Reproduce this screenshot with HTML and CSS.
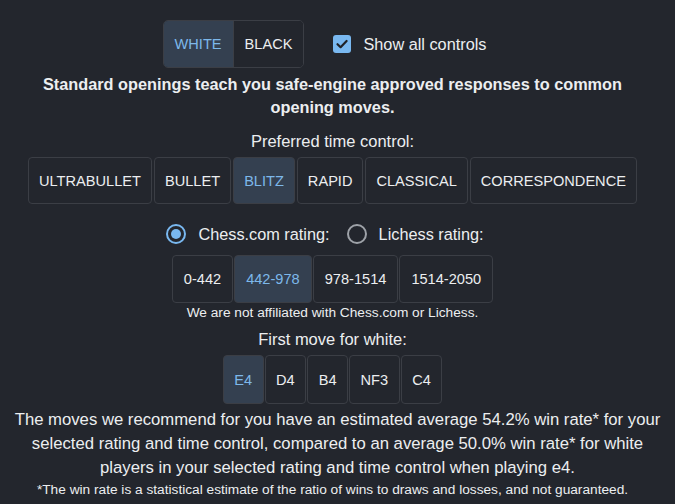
FILE: index.html
```html
<!DOCTYPE html>
<html>
<head>
<meta charset="utf-8">
<link rel="stylesheet" href="styles.css">
</head>
<body>
<main class="page">
  <div class="top-row">
    <div class="seg">
      <button class="seg-btn active">WHITE</button>
      <button class="seg-btn">BLACK</button>
    </div>
    <label class="check">
      <span class="check-box"><svg viewBox="0 0 18 18" width="18" height="18"><path d="M4.5 9.2 L7.6 12.2 L13.6 6" fill="none" stroke="#1f2228" stroke-width="2.2" stroke-linecap="round" stroke-linejoin="round"/></svg></span>
      <span>Show all controls</span>
    </label>
  </div>
  <p class="lead">Standard openings teach you safe-engine approved responses to common opening moves.</p>
  <p class="label">Preferred time control:</p>
  <div class="btns times">
    <button class="btn">ULTRABULLET</button>
    <button class="btn">BULLET</button>
    <button class="btn active">BLITZ</button>
    <button class="btn">RAPID</button>
    <button class="btn">CLASSICAL</button>
    <button class="btn">CORRESPONDENCE</button>
  </div>
  <div class="radios">
    <label class="radio"><span class="radio-dot on"></span>Chess.com rating:</label>
    <label class="radio"><span class="radio-dot"></span>Lichess rating:</label>
  </div>
  <div class="btns rating">
    <button class="btn">0-442</button>
    <button class="btn active">442-978</button>
    <button class="btn">978-1514</button>
    <button class="btn">1514-2050</button>
  </div>
  <p class="note">We are not affiliated with Chess.com or Lichess.</p>
  <p class="label move-label">First move for white:</p>
  <div class="btns moves">
    <button class="btn active">E4</button>
    <button class="btn">D4</button>
    <button class="btn">B4</button>
    <button class="btn">NF3</button>
    <button class="btn">C4</button>
  </div>
  <p class="summary">The moves we recommend for you have an estimated average 54.2% win rate* for your selected rating and time control, compared to an average 50.0% win rate* for white players in your selected rating and time control when playing e4.</p>
  <p class="foot">*The win rate is a statistical estimate of the ratio of wins to draws and losses, and not guaranteed.</p>
</main>
</body>
</html>
```

FILE: styles.css
```css
html, body {
  margin: 0;
  padding: 0;
  background: #23262d;
  color: #eceef0;
  font-family: "Liberation Sans", Arial, sans-serif;
  font-size: 16.5px;
}
.page {
  width: 665px;
  display: flex;
  flex-direction: column;
  align-items: center;
  padding-top: 20px;
}
p { margin: 0; text-align: center; }
button {
  font-family: inherit;
  cursor: pointer;
}
.top-row {
  display: flex;
  align-items: center;
  gap: 29px;
  margin-left: -16px;
}
.seg {
  display: flex;
  border: 1px solid #3b3e45;
  border-radius: 5px;
  overflow: hidden;
  height: 48px;
  box-sizing: border-box;
}
.seg-btn {
  background: #23262d;
  color: #eceef0;
  border: 0;
  font-size: 14.6px;
  padding: 0 11px;
}
.seg-btn + .seg-btn { border-left: 1px solid #3b3e45; }
.seg-btn.active { background: #344050; color: #7db8ea; }
.check {
  display: flex;
  align-items: center;
  gap: 12px;
  font-size: 16.3px;
}
.check-box {
  width: 18px;
  height: 18px;
  border-radius: 3px;
  background: #79b8f0;
  display: flex;
}
.lead {
  font-weight: bold;
  font-size: 16.3px;
  line-height: 23px;
  margin-top: 5px;
  width: 640px;
}
.label {
  margin-top: 11px;
  line-height: 22px;
}
.btns {
  display: flex;
  gap: 2px;
  margin-top: 5px;
}
.btn {
  height: 47px;
  box-sizing: border-box;
  background: #23262d;
  color: #eceef0;
  border: 1px solid #3b3e45;
  border-radius: 4px;
  font-size: 14.6px;
  padding: 0 10px;
}
.btn.active { background: #344050; color: #7db8ea; }
.radios {
  display: flex;
  gap: 17px;
  margin-top: 19px;
  margin-left: -15px;
  font-size: 16.3px;
}
.radio {
  display: flex;
  align-items: center;
  gap: 12px;
  line-height: 22px;
}
.radio-dot {
  width: 20px;
  height: 20px;
  box-sizing: border-box;
  border-radius: 50%;
  border: 2px solid #9ea2a8;
  position: relative;
}
.radio-dot.on { border-color: #79b8f0; }
.radio-dot.on::after {
  content: "";
  position: absolute;
  left: 3px;
  top: 3px;
  width: 10px;
  height: 10px;
  border-radius: 50%;
  background: #79b8f0;
}
.rating { margin-top: 10px; gap: 1px; }
.rating .btn { height: 48px; padding: 0 11px; }
.note {
  font-size: 13.7px;
  line-height: 16px;
  margin-top: 2px;
}
.move-label { margin-top: 7px; }
.moves { margin-top: 5px; gap: 1px; }
.moves .btn { height: 49px; padding: 0 10.5px; }
.summary {
  font-size: 16.7px;
  margin-top: 4px;
  margin-left: 10px;
  line-height: 24px;
  width: 660px;
}
.foot {
  font-size: 13.7px;
  line-height: 18px;
  margin-top: 1px;
}
```
